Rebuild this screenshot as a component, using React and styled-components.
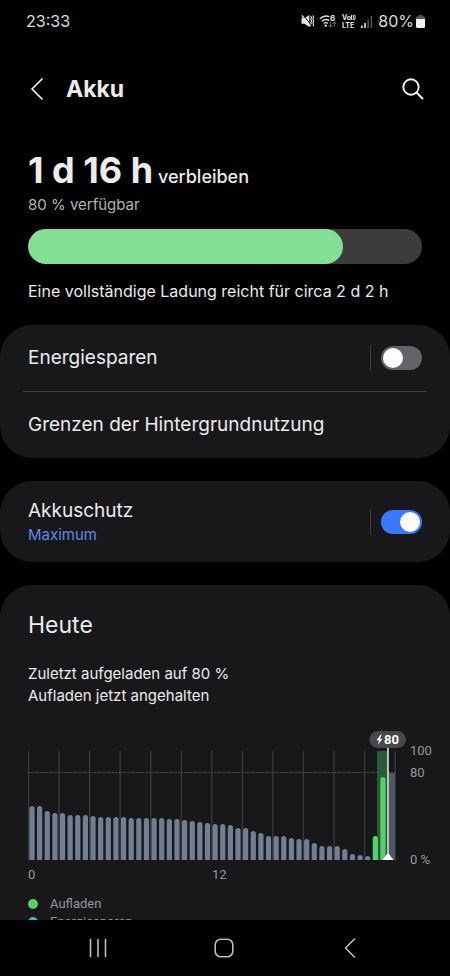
import React from "react";
import styled, { createGlobalStyle } from "styled-components";

const GlobalStyle = createGlobalStyle`
  * { box-sizing: border-box; }
  body { margin: 0; background: #000; }
  button { background: none; border: 0; padding: 0; color: inherit; font: inherit; cursor: pointer; }
  h1, h2, p, ul { margin: 0; padding: 0; }
`;

const Screen = styled.div`
  display: flex;
  flex-direction: column;
  height: 100vh;
  background: #000;
  color: #ececec;
  font-family: Inter, "Noto Sans", sans-serif;
`;

const StatusBar = styled.div`
  display: flex;
  flex: none;
  align-items: center;
  justify-content: space-between;
  height: 42px;
  padding: 0 25px 0 26px;
  font-size: 16px;
  color: #dedede;
`;

const StatusIcons = styled.div`
  display: flex;
  align-items: center;
  gap: 5px;
`;

const BatteryLevel = styled.span`
  display: flex;
  align-items: center;
  gap: 2px;
`;

const Header = styled.header`
  display: flex;
  flex: none;
  align-items: center;
  gap: 16px;
  height: 94px;
  padding: 0 24px;
`;

const IconButton = styled.button`
  display: flex;
  align-items: center;
  justify-content: center;
  width: 26px;
  height: 32px;
`;

const Title = styled.h1`
  flex: 1;
  font-size: 23px;
  line-height: 32px;
  font-weight: 700;
`;

const Content = styled.main`
  display: flex;
  flex: 1;
  flex-direction: column;
  gap: 23px;
  min-height: 0;
  overflow: hidden;
`;

const Summary = styled.section`
  display: flex;
  flex: none;
  flex-direction: column;
  padding: 12px 28px 0;
`;

const Remaining = styled.p`
  font-size: 18px;
  line-height: 24px;
  font-weight: 500;
`;

const Duration = styled.strong`
  font-size: 36px;
  line-height: 44px;
  font-weight: 700;
`;

const Available = styled.p`
  font-size: 15px;
  line-height: 26px;
  color: #b4b4b4;
`;

const ChargeTrack = styled.div`
  height: 35px;
  margin: 11px 0 16px;
  border-radius: 18px;
  background: #3c3c3c;
  overflow: hidden;
`;

const ChargeFill = styled.div`
  height: 100%;
  border-radius: 18px;
  background: #82df94;
`;

const Estimate = styled.p`
  font-size: 16px;
  line-height: 22px;
`;

const Card = styled.section`
  flex: none;
  padding: 0 28px;
  border-radius: 32px;
  background: #18181a;
`;

const Row = styled.div`
  display: flex;
  align-items: center;
  justify-content: space-between;
  min-height: ${(p) => (p.$tall ? 81 : 66)}px;
`;

const Divider = styled.hr`
  height: 1px;
  margin: 0 -5px;
  border: 0;
  background: #414143;
`;

const RowLabel = styled.label`
  display: flex;
  flex-direction: column;
  font-size: 19px;
  line-height: 26px;
`;

const RowButton = styled.button`
  flex: 1;
  text-align: left;
  font-size: 19px;
  line-height: 26px;
`;

const RowNote = styled.span`
  font-size: 15px;
  line-height: 22px;
  color: #6088e8;
`;

const SwitchSlot = styled.div`
  display: flex;
  align-items: center;
  height: 26px;
  padding-left: 10px;
  border-left: 1px solid #3c3c3e;
`;

const Switch = styled.input`
  appearance: none;
  width: 41px;
  height: 24px;
  margin: 0;
  padding: 2px;
  border-radius: 12px;
  background: #636368;
  cursor: pointer;

  &::before {
    content: "";
    display: block;
    width: 20px;
    height: 20px;
    border-radius: 50%;
    background: #fdfdfd;
  }

  &:checked { background: #3a78fb; }
  &:checked::before { margin-left: auto; }
`;

const UsageCard = styled(Card)`
  padding-top: 24px;
  padding-right: 0;
`;

const UsageTitle = styled.h2`
  font-size: 23px;
  line-height: 32px;
  font-weight: 400;
`;

const UsageText = styled.p`
  margin: 22px 0;
  font-size: 15px;
  line-height: 22px;
`;

const Chart = styled.svg`
  display: block;
  width: 100%;
  font-family: Roboto, sans-serif;
  font-size: 13px;
  fill: #97979b;
`;

const Legend = styled.ul`
  display: flex;
  flex-direction: column;
  margin-top: 12px;
  padding-bottom: 24px;
  list-style: none;
  font-family: Roboto, sans-serif;
  font-size: 13px;
  line-height: 18px;
  color: #97979b;
`;

const LegendItem = styled.li`
  display: flex;
  align-items: center;
  gap: 12px;

  &::before {
    content: "";
    width: 10px;
    height: 10px;
    border-radius: 50%;
    background: ${(p) => p.$color};
  }
`;

const NavBar = styled.nav`
  display: grid;
  flex: none;
  grid-template-columns: repeat(3, 1fr);
  height: 56px;
  padding: 0 37px 0 35px;
`;

const NavButton = styled.button`
  display: flex;
  align-items: center;
  justify-content: center;
`;

const LEVELS = [
  54, 54, 49, 47, 47, 45, 45, 45, 44, 43, 43, 43, 43, 42, 42, 42, 42, 42, 41,
  41, 40, 39, 38, 37, 36, 36, 35, 32, 32, 29, 27, 24, 24, 24, 22, 21, 21, 17,
  14, 14, 14, 11, 6, 5, 4,
];
const CHARGING = [24, 83];
const TOP = 22;
const BASE = 131;

function barPath(index, height) {
  const x = 1.4 + index * 7.63;
  const r = Math.min(2.6, height);
  return `M${x} ${BASE}v${-(height - r)}a2.6 ${r} 0 0 1 5.2 0v${height - r}z`;
}

function UsageChart() {
  return (
    <Chart viewBox="0 0 422 154" role="img" aria-label="Akkustand heute">
      <g stroke="#3b3b3d" strokeWidth="1.3">
        {Array.from({ length: 13 }, (_, i) => (
          <path key={i} d={`M${0.5 + i * 30.55} ${TOP}V${BASE}`} />
        ))}
      </g>
      <path d="M0 43.500H367" stroke="#4a4a4c" strokeDasharray="2 1" />
      <path d="M349 22h11v109h-11z" fill="#2a5a38" />
      <path d="M361 44h6v87h-6z" fill="#4e5766" />
      {LEVELS.map((h, i) => (
        <path key={i} d={barPath(i, h)} fill="#727f93" />
      ))}
      {CHARGING.map((h, i) => (
        <path key={i} d={barPath(LEVELS.length + i, h)} fill="#56cf6d" />
      ))}
      <path d="M360 19V131" stroke="#e2e4e2" strokeWidth="1.6" />
      <path d="M354.500 131l4.600-6q.9-1 1.800 0l4.600 6z" fill="#fff" />
      <rect x="341.500" y="2" width="36.500" height="17" rx="8.500" fill="#48484b" />
      <path d="M352.800 5.500l-4.300 5.800h2.600l-1.200 4.500 4.600-6h-2.700l1.900-4.300z" fill="#fff" />
      <text x="356" y="15" fontWeight="700" fill="#fff">80</text>
      <text x="382" y="26">100</text>
      <text x="382" y="48">80</text>
      <text x="382" y="135">0 %</text>
      <text x="0" y="150">0</text>
      <text x="184" y="150">12</text>
    </Chart>
  );
}

function MuteIcon() {
  return (
    <svg width="13" height="14" viewBox="0 0 13 14" fill="none" aria-hidden="true">
      <path d="M.5 4.300h2.900L8.300 1v12L3.400 9.700H.5z" fill="#e6e6e6" />
      <path d="M1.900.9l8.600 10.600" stroke="#000" strokeWidth="1" />
      <path d="M.9 1.500l8.600 10.700" stroke="#e6e6e6" strokeWidth="1.400" />
      <path d="M9.700 2l.9 1.700-.9 1.600.9 1.700-.9 1.700.9 1.600M11.900 1.500l.8 1.800-.8 1.800.8 1.900-.8 1.800.8 1.800-.8 1.800" stroke="#e6e6e6" strokeWidth="1.100" />
    </svg>
  );
}

const IconText = styled.text`
  font-family: Inter, sans-serif;
  font-weight: 700;
  fill: #e6e6e6;
`;

function WifiIcon() {
  return (
    <svg width="18" height="14" viewBox="0 0 18 14" fill="none" aria-hidden="true">
      <path d="M.8 4.800Q5.500.6 10.300 2.700M2.700 7.200q3.500-3 7.600-.8M4.700 9.500q2.200-1.700 4.300 0" stroke="#dcdcdc" strokeWidth="1.400" />
      <circle cx="6.800" cy="11.600" r="1.200" fill="#e6e6e6" />
      <IconText x="11" y="6.500" fontSize="8">6</IconText>
      <path d="M11.500 7.500v5M9.800 11l1.700 1.700 1.700-1.700M15.500 13V8M13.800 9.600L15.500 8l1.700 1.600" stroke="#5c5c5c" strokeWidth="1.100" />
    </svg>
  );
}

function VolteIcon() {
  return (
    <svg width="14" height="14" viewBox="0 0 14 14" fill="none" aria-hidden="true">
      <IconText x="0" y="6" fontSize="7">Vo</IconText>
      <path d="M9.600 1v5M11 1q1.300 2.500 0 5M12.400.6q1.700 2.900 0 5.800" stroke="#e6e6e6" />
      <IconText x="0" y="13.500" fontSize="7">LTE</IconText>
    </svg>
  );
}

function SignalIcon() {
  return (
    <svg width="12" height="13" viewBox="0 0 12 13" aria-hidden="true">
      <path d="M0 10.500h1.600V13H0zM3.200 8h1.600v5H3.200z" fill="#e6e6e6" />
      <path d="M6.400 4.500H8V13H6.400zM9.600 1h1.600v12H9.600z" fill="#555" />
    </svg>
  );
}

function BatteryIcon() {
  return (
    <svg width="9" height="13" viewBox="0 0 9 13" aria-hidden="true">
      <path d="M2.500 0h4v1.200H7.500Q9 1.200 9 2.700V4H0V2.700Q0 1.200 1.500 1.200h1z" fill="#555" />
      <path d="M0 4h9v7.500Q9 13 7.500 13h-6Q0 13 0 11.500z" fill="#f0f0f0" />
    </svg>
  );
}

export default function App() {
  return (
    <Screen>
      <GlobalStyle />
      <StatusBar>
        <span>23:33</span>
        <StatusIcons>
          <MuteIcon />
          <WifiIcon />
          <VolteIcon />
          <SignalIcon />
          <BatteryLevel>
            80%
            <BatteryIcon />
          </BatteryLevel>
        </StatusIcons>
      </StatusBar>
      <Header>
        <IconButton aria-label="Zurück">
          <svg width="12" height="22" viewBox="0 0 12 22" fill="none">
            <path d="M11 1L1 11l10 10" stroke="#f2f2f2" strokeWidth="1.700" strokeLinecap="round" strokeLinejoin="round" />
          </svg>
        </IconButton>
        <Title>Akku</Title>
        <IconButton aria-label="Suchen">
          <svg width="22" height="22" viewBox="0 0 22 22" fill="none">
            <circle cx="9" cy="9" r="7.700" stroke="#f2f2f2" strokeWidth="1.900" />
            <path d="M14.500 14.500L20.500 20.500" stroke="#f2f2f2" strokeWidth="2" strokeLinecap="round" />
          </svg>
        </IconButton>
      </Header>
      <Content>
        <Summary>
          <Remaining>
            <Duration>1 d 16 h</Duration> verbleiben
          </Remaining>
          <Available>80 % verfügbar</Available>
          <ChargeTrack>
            <ChargeFill style={{ width: "80%" }} />
          </ChargeTrack>
          <Estimate>Eine vollständige Ladung reicht für circa 2 d 2 h</Estimate>
        </Summary>
        <Card>
          <Row>
            <RowLabel htmlFor="power-saving">Energiesparen</RowLabel>
            <SwitchSlot>
              <Switch id="power-saving" type="checkbox" role="switch" />
            </SwitchSlot>
          </Row>
          <Divider />
          <Row>
            <RowButton>Grenzen der Hintergrundnutzung</RowButton>
          </Row>
        </Card>
        <Card>
          <Row $tall>
            <RowLabel htmlFor="protection">
              Akkuschutz
              <RowNote>Maximum</RowNote>
            </RowLabel>
            <SwitchSlot>
              <Switch id="protection" type="checkbox" role="switch" defaultChecked />
            </SwitchSlot>
          </Row>
        </Card>
        <UsageCard>
          <UsageTitle>Heute</UsageTitle>
          <UsageText>
            Zuletzt aufgeladen auf 80 %
            <br />
            Aufladen jetzt angehalten
          </UsageText>
          <UsageChart />
          <Legend>
            <LegendItem $color="#56cf6d">Aufladen</LegendItem>
            <LegendItem $color="#3fb8c4">Energiesparen</LegendItem>
          </Legend>
        </UsageCard>
      </Content>
      <NavBar>
        <NavButton aria-label="Letzte Apps">
          <svg width="18" height="20" viewBox="0 0 18 20" fill="none">
            <path d="M1.500 1.500v17M9 1.500v17M16.500 1.500v17" stroke="#bdbdbd" strokeWidth="1.600" strokeLinecap="round" />
          </svg>
        </NavButton>
        <NavButton aria-label="Startbildschirm">
          <svg width="20" height="20" viewBox="0 0 20 20" fill="none">
            <rect x="1.200" y="1.200" width="17.600" height="17.600" rx="5.500" stroke="#bdbdbd" strokeWidth="1.600" />
          </svg>
        </NavButton>
        <NavButton aria-label="Zurück">
          <svg width="12" height="20" viewBox="0 0 12 20" fill="none">
            <path d="M10.500 1L1.500 10l9 9" stroke="#bdbdbd" strokeWidth="1.600" strokeLinecap="round" strokeLinejoin="round" />
          </svg>
        </NavButton>
      </NavBar>
    </Screen>
  );
}
